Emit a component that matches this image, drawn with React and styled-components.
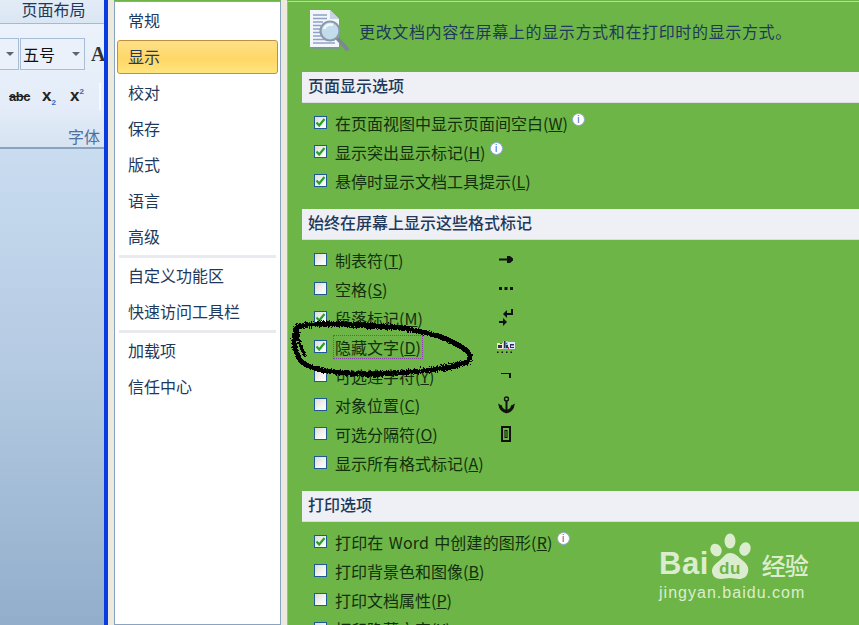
import React from 'react';
import styled, { createGlobalStyle } from 'styled-components';

const Global = createGlobalStyle`
  html, body { margin: 0; padding: 0; background: #6db547; overflow: hidden; }
  * { box-sizing: border-box; }
`;

const FONT = `"Noto Sans CJK SC", "Liberation Sans", sans-serif`;

const Page = styled.div`
  position: relative;
  display: flex;
  width: 859px;
  height: 625px;
  overflow: hidden;
  font-family: ${FONT};
  font-size: 16px;
`;

const Ribbon = styled.div`
  width: 104px;
  flex: none;
  display: flex;
  flex-direction: column;
  overflow: hidden;
  background: linear-gradient(180deg, #c9dcf0 150px, #b4cae2 370px, #92aecb 100%);
`;

const TabTitle = styled.div`
  height: 24px;
  flex: none;
  text-align: center;
  padding-left: 3px;
  line-height: 18px;
  font-size: 16px;
  color: #1e395b;
  background: linear-gradient(180deg, #e2ecf7, #dbe6f4);
  border-bottom: 1px solid #a5b9d2;
`;

const RibbonPanel = styled.div`
  height: 125px;
  flex: none;
  padding-top: 14px;
  display: flex;
  flex-direction: column;
  background: linear-gradient(180deg, #ebf2fb 0, #e3ecf8 70%, #d6e3f2 100%);
  border-bottom: 2px solid #8aa3bf;
`;

const ToolRow = styled.div`
  display: flex;
  align-items: center;
  height: 32px;
  width: 120px;
`;

const Combo = styled.div`
  height: 32px;
  width: ${p => p.$w}px;
  flex: none;
  margin-right: ${p => p.$gap || 0}px;
  display: flex;
  align-items: center;
  justify-content: space-between;
  padding: 0 4px 0 2px;
  font-size: 16px;
  color: #111;
  background: #eaf1fb;
  border: 1px solid #a9bdd7;
  border-left: ${p => (p.$open ? 'none' : '1px solid #a9bdd7')};
`;

const Caret = styled.span`
  width: 0;
  height: 0;
  border-left: 4px solid transparent;
  border-right: 4px solid transparent;
  border-top: 4px solid #5b6470;
`;

const BigA = styled.span`
  margin-left: 6px;
  font: bold 20px "Liberation Serif", serif;
  color: #333;
`;

const FormatRow = styled.div`
  display: flex;
  align-items: center;
  height: 26px;
  margin-top: 13px;
  padding-left: 9px;
  color: #222;
  font-weight: bold;
  font-family: "Liberation Sans", sans-serif;
`;

const Strike = styled.span`
  width: 22px;
  font-size: 13px;
  letter-spacing: -0.4px;
  text-decoration: line-through;
`;

const Script = styled.span`
  font-size: 17px;
  margin-left: ${p => p.$left}px;
  width: ${p => p.$w}px;
  line-height: 20px;
  sub, sup {
    font-size: 8px;
    color: #3a66b8;
    line-height: 0;
  }
`;

const ToolDivider = styled.span`
  width: 2px;
  height: 27px;
  background: #f4f8fd;
  margin-left: 3px;
  flex: none;
`;

const GroupLabel = styled.div`
  margin-top: auto;
  padding: 0 4px 0 0;
  text-align: right;
  font-size: 16px;
  line-height: 22px;
  color: #4f719c;
`;

const BlueStripe = styled.div`
  width: 4px;
  flex: none;
  background: #0a3be0;
`;

const Gutter = styled.div`
  width: ${p => p.$w}px;
  flex: none;
  background: #ece9df;
`;

const Nav = styled.nav`
  width: 167px;
  flex: none;
  margin-top: 1px;
  padding: 1px 1px 0;
  background: #fff;
  border: 1px solid #8aa3bf;
`;

const NavItem = styled.div`
  height: 36px;
  line-height: 35px;
  padding-left: 12px;
  color: #1e395b;
  position: relative;
  z-index: 0;
  ${p => p.$active && `
    &::before {
      content: '';
      position: absolute;
      z-index: -1;
      left: 1px;
      right: 1px;
      top: 1px;
      bottom: 1px;
      border: 1px solid #c2903c;
      border-radius: 3px;
      background: linear-gradient(180deg, #fde08a 0, #ffd766 55%, #ffe57f 100%);
    }
  `}
`;

const NavDivider = styled.div`
  height: 3px;
  margin: 0 3px;
  background: #e9eaef;
`;

const Content = styled.main`
  flex: 1;
  min-width: 0;
  margin-top: 1px;
  padding-left: 14px;
  background: #6db547;
  border-left: 1px solid #9db0c4;
  border-top: 1px solid #c6ccd2;
  display: flex;
  flex-direction: column;
`;

const Intro = styled.div`
  height: 70px;
  flex: none;
  display: flex;
  align-items: flex-start;
  padding-top: 7px;
  margin-left: 7px;
`;

const IntroText = styled.div`
  margin: 10px 0 0 8px;
  font-size: 16px;
  letter-spacing: 0.65px;
  line-height: 24px;
  color: #1e395b;
  white-space: nowrap;
`;

const SectionTitle = styled.h3`
  margin: 0;
  height: 31px;
  flex: none;
  padding-left: 6px;
  font-size: 16px;
  font-weight: 500;
  line-height: 27px;
  color: #1e395b;
  background: #eff0f5;
  border-bottom: 1px solid #dcdde2;
`;

const Options = styled.div`
  padding: ${p => p.$top}px 0 ${p => p.$bottom}px 12px;
  flex: none;
`;

const Row = styled.div`
  height: 29px;
  display: flex;
  align-items: center;
`;

const Box = styled.span`
  width: 13px;
  height: 13px;
  flex: none;
  border: 1px solid #1f5a96;
  background: linear-gradient(135deg, #dcdcd6 0, #f4f4f0 60%, #fff 100%);
  display: flex;
  align-items: center;
  justify-content: center;
`;

const Label = styled.span`
  margin-left: 8px;
  color: #12300c;
  white-space: nowrap;
  line-height: 20px;
  ${p => p.$w && `width: ${p.$w}px; flex: none;`}
  u { text-underline-offset: 1px; }
`;

const WideWords = styled.span`
  word-spacing: 1.5px;
  letter-spacing: 0.15px;
`;

const Focused = styled.span`
  display: inline-block;
  outline: 1px dotted #8a3fb0;
  outline-offset: 1px;
`;

const Info = styled.span`
  width: 13px;
  height: 13px;
  margin: -7px 0 0 4px;
  flex: none;
  border-radius: 50%;
  background: #fff;
  border: 1px solid #8fa8d8;
  color: #3b62ad;
  font: 10px/11px "Liberation Sans", sans-serif;
  text-align: center;
`;

const SymbolCell = styled.span`
  width: 24px;
  height: 20px;
  flex: none;
  display: flex;
  align-items: center;
  justify-content: center;
`;

const Scribble = styled.svg`
  position: absolute;
  left: 285px;
  top: 310px;
  pointer-events: none;
`;

const Watermark = styled.div`
  position: absolute;
  left: 659px;
  top: 532px;
  width: 180px;
  color: #dcedcf;
`;

const WordMark = styled.div`
  display: flex;
  align-items: flex-end;
  height: 50px;
  font: bold 31px/36px "Liberation Sans", sans-serif;
  letter-spacing: 0.5px;
`;

const Paw = styled.svg`
  flex: none;
  margin: 0 0 0 -2px;
`;

const Jingyan = styled.span`
  margin-left: 3px;
  font: 500 24px/34px ${FONT};
  letter-spacing: -1px;
`;

const Domain = styled.div`
  font: 16px/20px "Liberation Sans", sans-serif;
  letter-spacing: 1.02px;
  margin-top: 1px;
`;

const Tick = () => (
  <svg width="11" height="11" viewBox="0 0 11 11">
    <path d="M1.5 5.5 L4.2 8.5 L9.5 2" fill="none" stroke="#27a127" strokeWidth="2.2" />
  </svg>
);

const Option = ({ checked, children, info, symbol, labelWidth }) => (
  <Row>
    <Box>{checked && <Tick />}</Box>
    <Label $w={labelWidth}>{children}</Label>
    {info && <Info>i</Info>}
    {symbol && <SymbolCell>{symbol}</SymbolCell>}
  </Row>
);

const TabSymbol = () => (
  <svg width="14" height="7" viewBox="0 0 14 7">
    <path d="M0 2.500h8V0h3l3 2.500v2L11 7H8V4.500H0z" fill="#111" />
  </svg>
);
const SpaceSymbol = () => (
  <svg width="14" height="3" viewBox="0 0 14 3">
    <path d="M0 0h3v3H0zM5.500 0h3v3h-3zM11 0h3v3h-3z" fill="#111" />
  </svg>
);
const ParaSymbol = () => (
  <svg width="14" height="18" viewBox="0 0 14 18">
    <path d="M12 0h2v6H8v3L4 5l4-4v3h4z" fill="#111" />
    <path d="M0 12h4V9l4 4-4 4v-3H0z" fill="#111" />
  </svg>
);
const HiddenSymbol = () => (
  <svg width="18" height="13" viewBox="0 0 18 13">
    <rect x="0" y="3" width="6" height="6" fill="#f4e9cf" />
    <rect x="6" y="1" width="5" height="8" fill="#9ccbe8" />
    <rect x="11" y="2" width="7" height="7" fill="#dbeaf4" />
    <path d="M1 5h4v3H1zM7 1h1.500v7H7zM9 5h2v3H9zM13 4h4v1.500h-3V7h3v1h-4z" fill="#2e2e55" />
    <path d="M3 3h2v1H3zM8.500 3H10v1H8.500zM11 7h1v2h-1z" fill="#c2334a" />
    <path d="M0 11.500h1.500V13H0zM4.500 11.500H6V13H4.500zM9 11.500h1.500V13H9zM13.500 11.500H15V13h-1.500z" fill="#111" />
  </svg>
);
const NonBreakSymbol = () => (
  <svg width="10" height="5" viewBox="0 0 10 5">
    <path d="M0 0h10v5H8V1H0z" fill="#111" />
  </svg>
);
const AnchorSymbol = () => (
  <svg width="17" height="18" viewBox="0 0 17 18">
    <circle cx="8.500" cy="3" r="2" fill="none" stroke="#111" strokeWidth="1.400" />
    <rect x="7.500" y="5" width="2" height="11" fill="#111" />
    <path d="M2.200 10 Q3.500 14.500 8.500 15.800 Q13.500 14.500 14.800 10" fill="none" stroke="#111" strokeWidth="3" />
    <path d="M0 7.500 L4.500 10 L1.500 12zM17 7.500 L12.500 10 L15.500 12z" fill="#111" />
  </svg>
);
const SeparatorSymbol = () => (
  <svg width="10" height="16" viewBox="0 0 10 16">
    <path fillRule="evenodd" d="M0 0h10v16H0zM2 2v12h6V2z" fill="#111" />
    <path fillRule="evenodd" d="M3.500 4h3v8h-3zM4.500 5v6h1V5z" fill="#111" />
  </svg>
);

const DocIcon = () => (
  <svg width="42" height="44" viewBox="0 0 42 44">
    <path d="M2 2h20l9 9v29H2z" fill="#7f8fa8" opacity=".65" />
    <path d="M1 1h20l9 9v28H1z" fill="#f3f6fb" />
    <path d="M21 1v9h9z" fill="#c6d2e6" />
    <path d="M4 6h14M4 9.500h14M4 13h10M4 16.500h8M4 20h7M4 23.500h7M4 27h8M4 30.500h22M4 34h22" stroke="#8ea1c6" strokeWidth="1.700" />
    <path d="M28 29l10 11" stroke="#7c8794" strokeWidth="4" strokeLinecap="round" />
    <circle cx="21" cy="22" r="9.500" fill="#c3dcec" stroke="#8a9aa8" strokeWidth="2.200" />
    <path d="M15 20a7 7 0 0 1 9-4" stroke="#f2f8fc" strokeWidth="2.500" fill="none" />
  </svg>
);

const PawMark = () => (
  <svg width="50" height="50" viewBox="0 0 50 50">
    <ellipse cx="7" cy="18" rx="5.500" ry="6.500" fill="#dcedcf" transform="rotate(-25 7 18)" />
    <ellipse cx="21" cy="9" rx="5.500" ry="7.500" fill="#dcedcf" />
    <ellipse cx="36" cy="17" rx="5.500" ry="7" fill="#dcedcf" transform="rotate(20 36 17)" />
    <path d="M21 21c6 0 8 4 12 7 5 4 7 7 6 12-1 5-5 7-9 7-3 0-6-1-9-1s-6 1-9 1c-5 0-9-3-9-8 0-4 3-7 7-10 4-3 6-8 11-8z" fill="#dcedcf" />
    <text x="21" y="42" textAnchor="middle" fontFamily="Liberation Sans, sans-serif" fontWeight="bold" fontSize="17" fill="#6db547">du</text>
  </svg>
);

export default function App() {
  return (
    <Page>
      <Global />
      <Ribbon>
        <TabTitle>页面布局</TabTitle>
        <RibbonPanel>
          <ToolRow>
            <Combo $w={19} $gap={1} $open><span />
              <Caret />
            </Combo>
            <Combo $w={65}>五号<Caret /></Combo>
            <BigA>A</BigA>
          </ToolRow>
          <FormatRow>
            <Strike>abc</Strike>
            <Script $left={11} $w={28}>x<sub>2</sub></Script>
            <Script $left={0} $w={26}>x<sup>2</sup></Script>
            <ToolDivider />
          </FormatRow>
          <GroupLabel>字体</GroupLabel>
        </RibbonPanel>
      </Ribbon>
      <BlueStripe />
      <Gutter $w={6} />
      <Nav>
        <NavItem>常规</NavItem>
        <NavItem $active>显示</NavItem>
        <NavItem>校对</NavItem>
        <NavItem>保存</NavItem>
        <NavItem>版式</NavItem>
        <NavItem>语言</NavItem>
        <NavItem>高级</NavItem>
        <NavDivider />
        <NavItem>自定义功能区</NavItem>
        <NavItem>快速访问工具栏</NavItem>
        <NavDivider />
        <NavItem>加载项</NavItem>
        <NavItem>信任中心</NavItem>
      </Nav>
      <Gutter $w={6} />
      <Content>
        <Intro>
          <DocIcon />
          <IntroText>更改文档内容在屏幕上的显示方式和在打印时的显示方式。</IntroText>
        </Intro>
        <SectionTitle>页面显示选项</SectionTitle>
        <Options $top={5} $bottom={14}>
          <Option checked info>在页面视图中显示页面间空白(<u>W</u>)</Option>
          <Option checked info>显示突出显示标记(<u>H</u>)</Option>
          <Option checked>悬停时显示文档工具提示(<u>L</u>)</Option>
        </Options>
        <SectionTitle>始终在屏幕上显示这些格式标记</SectionTitle>
        <Options $top={5} $bottom={14}>
          <Option labelWidth={159} symbol={<TabSymbol />}>制表符(<u>T</u>)</Option>
          <Option labelWidth={159} symbol={<SpaceSymbol />}>空格(<u>S</u>)</Option>
          <Option checked labelWidth={159} symbol={<ParaSymbol />}>段落标记(<u>M</u>)</Option>
          <Option checked labelWidth={159} symbol={<HiddenSymbol />}><Focused>隐藏文字(<u>D</u>)</Focused></Option>
          <Option labelWidth={159} symbol={<NonBreakSymbol />}>可选连字符(<u>Y</u>)</Option>
          <Option labelWidth={159} symbol={<AnchorSymbol />}>对象位置(<u>C</u>)</Option>
          <Option labelWidth={159} symbol={<SeparatorSymbol />}>可选分隔符(<u>O</u>)</Option>
          <Option>显示所有格式标记(<u>A</u>)</Option>
        </Options>
        <SectionTitle>打印选项</SectionTitle>
        <Options $top={5} $bottom={0}>
          <Option checked info><WideWords>打印在 Word 中创建的图形(<u>R</u>)</WideWords></Option>
          <Option>打印背景色和图像(<u>B</u>)</Option>
          <Option>打印文档属性(<u>P</u>)</Option>
          <Option>打印隐藏文字(<u>X</u>)</Option>
        </Options>
      </Content>
      <Scribble width="200" height="80" viewBox="0 0 200 80" shapeRendering="crispEdges">
        <defs>
          <filter id="rough" x="-5%" y="-20%" width="110%" height="140%">
            <feTurbulence type="fractalNoise" baseFrequency="0.9" numOctaves="2" seed="4" />
            <feDisplacementMap in="SourceGraphic" scale="6" />
          </filter>
        </defs>
        <g fill="none" stroke="#000" strokeLinecap="round" filter="url(#rough)">
          <path strokeWidth="5" d="M11 18 C30 12 60 15 100 17 C130 18 160 26 178 38 C190 46 186 52 172 56 C140 62 90 66 50 62 C30 60 20 56 15 50 C10 42 8 30 11 18" />
          <path strokeWidth="3" d="M12 15 C40 10 80 14 120 17 M60 64 C100 68 140 62 176 52 M20 46 C15 36 12 26 14 20 M170 32 C182 40 188 46 184 52" />
        </g>
      </Scribble>
      <Watermark>
        <WordMark>
          Bai
          <Paw as={PawMark} />
          <Jingyan>经验</Jingyan>
        </WordMark>
        <Domain>jingyan.baidu.com</Domain>
      </Watermark>
    </Page>
  );
}
